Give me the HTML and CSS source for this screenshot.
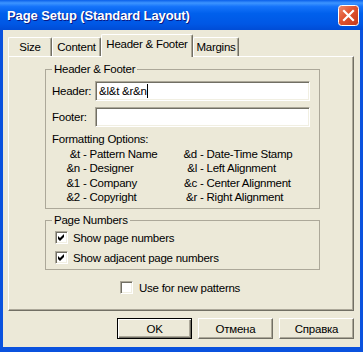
FILE: index.html
```html
<!DOCTYPE html>
<html lang="en">
<head>
<meta charset="UTF-8">
<title>Page Setup</title>
<link rel="stylesheet" href="styles.css">
</head>
<body>
	<div class="window">
		<div class="titlebar">
			<span class="title">Page Setup (Standard Layout)</span>
			<span class="close">
				<svg width="21" height="21" viewBox="0 0 21 21">
					<defs>
						<linearGradient id="closeFill" x1="0" y1="0" x2="1" y2="1">
							<stop offset="0" stop-color="#F08B6C"/>
							<stop offset="0.45" stop-color="#E0532F"/>
							<stop offset="1" stop-color="#C4381A"/>
						</linearGradient>
					</defs>
					<rect x="0.5" y="0.5" width="20" height="20" rx="3" fill="url(#closeFill)" stroke="#fff"/>
					<path d="M6 6 L15 15 M15 6 L6 15" stroke="#fff" stroke-width="2.2" stroke-linecap="square"/>
				</svg>
			</span>
		</div>
		<div class="client">
			<div class="tabs">
				<div class="tab tab-size">Size</div>
				<div class="tab tab-content">Content</div>
				<div class="tab tab-active">Header &amp; Footer</div>
				<div class="tab tab-margins">Margins</div>
			</div>
			<div class="panel">
				<fieldset class="group group-hf">
					<legend>Header &amp; Footer</legend>
					<div class="field-row">
						<span class="label">Header:</span>
						<div class="field">&amp;l&amp;t &amp;r&amp;n<span class="caret"></span></div>
					</div>
					<div class="field-row">
						<span class="label">Footer:</span>
						<div class="field"></div>
					</div>
					<div class="options-title">Formatting Options:</div>
					<div class="options">
						<span class="code">&amp;t</span><span class="desc">- Pattern Name</span>
						<span class="code">&amp;d</span><span class="desc">- Date-Time Stamp</span>
						<span class="code">&amp;n</span><span class="desc">- Designer</span>
						<span class="code">&amp;l</span><span class="desc">- Left Alignment</span>
						<span class="code">&amp;1</span><span class="desc">- Company</span>
						<span class="code">&amp;c</span><span class="desc">- Center Alignment</span>
						<span class="code">&amp;2</span><span class="desc">- Copyright</span>
						<span class="code">&amp;r</span><span class="desc">- Right Alignment</span>
					</div>
				</fieldset>
				<fieldset class="group group-pn">
					<legend>Page Numbers</legend>
					<div class="check-row">
						<span class="check"><svg width="7" height="7" viewBox="0 0 7 7"><path d="M0 2 L2 4 L6 0 L6 3 L2 7 L0 5 Z"/></svg></span>
						Show page numbers
					</div>
					<div class="check-row">
						<span class="check"><svg width="7" height="7" viewBox="0 0 7 7"><path d="M0 2 L2 4 L6 0 L6 3 L2 7 L0 5 Z"/></svg></span>
						Show adjacent page numbers
					</div>
				</fieldset>
				<div class="check-row new-patterns">
					<span class="check"></span>
					Use for new patterns
				</div>
			</div>
			<div class="buttons">
				<div class="btn btn-default">OK</div>
				<div class="btn">Отмена</div>
				<div class="btn">Справка</div>
			</div>
		</div>
	</div>
</body>
</html>
```
FILE: styles.css
```css
*{box-sizing: border-box;}
body{
	margin: 0;
	font-family: "Liberation Sans", Arial, sans-serif;
	font-size: 11.5px;
	letter-spacing: -0.25px;
	color: #000;
	white-space: nowrap;
}

.window{
	width: 363px;
	height: 352px;
	display: flex;
	flex-direction: column;
	background: #0A52DE;
	padding-bottom: 5px;
}

/* title bar */
.titlebar{
	height: 30px;
	flex: none;
	display: flex;
	align-items: center;
	justify-content: space-between;
	padding: 0 4px 0 7px;
	background: linear-gradient(#0A5FEA 0%, #3D95FF 10%, #1573FA 22%, #0060EC 45%, #0057E5 80%, #004CD6 100%);
	color: #fff;
	font: bold 13px "Liberation Sans", Arial, sans-serif;
	letter-spacing: -0.1px;
	text-shadow: 1px 1px #0A1883;
}
.close{display: flex;}

/* dialog body */
.client{
	flex: 1;
	margin: 0 3px;
	background: #ECE9D8;
	padding: 4px 6px 0 5px;
	display: flex;
	flex-direction: column;
}

/* tabs */
.tabs{
	display: flex;
	align-items: flex-end;
	height: 22px;
}
.tab{
	height: 19px;
	border: 1px solid;
	border-color: #fff #716F64 transparent #fff;
	border-bottom: none;
	border-radius: 2px 2px 0 0;
	box-shadow: inset -1px 0 #ACA899;
	text-align: center;
	line-height: 19px;
}
.tab-size{width: 44px;}
.tab-content{width: 49px;}
.tab-margins{width: 46px;}
.tab-active{
	width: 92px;
	height: 23px;
	margin-bottom: -1px;
	position: relative;
	background: #ECE9D8;
	line-height: 18px;
}

.panel{
	height: 255px;
	border: 1px solid;
	border-color: #fff #716F64 #716F64 #fff;
	box-shadow: inset -1px -1px #ACA899;
	padding: 5px 0 0 36px;
}

/* group boxes */
.group{
	width: 275px;
	min-width: 0;
	margin: 0;
	padding: 0 6px 3px 6px;
	border: 1px solid #ACA899;
}
.group legend{
	padding: 0 2px;
	line-height: 15px;
}
.group-pn{
	margin-top: 4px;
	padding-bottom: 1px;
}

.field-row{
	display: flex;
	align-items: center;
	height: 20px;
	margin-top: 4px;
}
.field-row + .field-row{margin-top: 6px;}
.label{width: 43px;}
.field{
	width: 215px;
	height: 20px;
	display: flex;
	align-items: center;
	padding-left: 3px;
	background: #fff;
	border: 1px solid;
	border-color: #ACA899 #fff #fff #ACA899;
	box-shadow: inset 1px 1px #716F64, inset -1px -1px #F1EFE2;
}
.caret{
	width: 1px;
	height: 14px;
	background: #000;
}

.options-title{
	margin-top: 5px;
	line-height: 14.5px;
}
.options{
	display: grid;
	grid-template-columns: 28px 97px 20px auto;
	line-height: 14.5px;
}
.code{text-align: right;}
.desc{padding-left: 3px;}

/* checkboxes */
.check-row{
	display: flex;
	align-items: center;
	gap: 5px;
	height: 20px;
	margin-left: 3px;
}
.check{
	width: 13px;
	height: 13px;
	flex: none;
	display: flex;
	align-items: center;
	justify-content: center;
	background: #fff;
	border: 1px solid;
	border-color: #ACA899 #fff #fff #ACA899;
	box-shadow: inset 1px 1px #716F64, inset -1px -1px #F1EFE2;
}
.new-patterns{
	gap: 6px;
	margin: 8px 0 0 75px;
}

/* buttons */
.buttons{
	display: flex;
	justify-content: flex-end;
	gap: 6px;
	margin-top: 7px;
}
.btn{
	width: 75px;
	height: 21px;
	display: flex;
	align-items: center;
	justify-content: center;
	background: #ECE9D8;
	border: 1px solid;
	border-color: #fff #716F64 #716F64 #fff;
	box-shadow: inset -1px -1px #ACA899;
}
.btn-default{
	border-color: #000;
	box-shadow: inset 1px 1px #fff, inset -1px -1px #716F64, inset -2px -2px #ACA899;
}
```
